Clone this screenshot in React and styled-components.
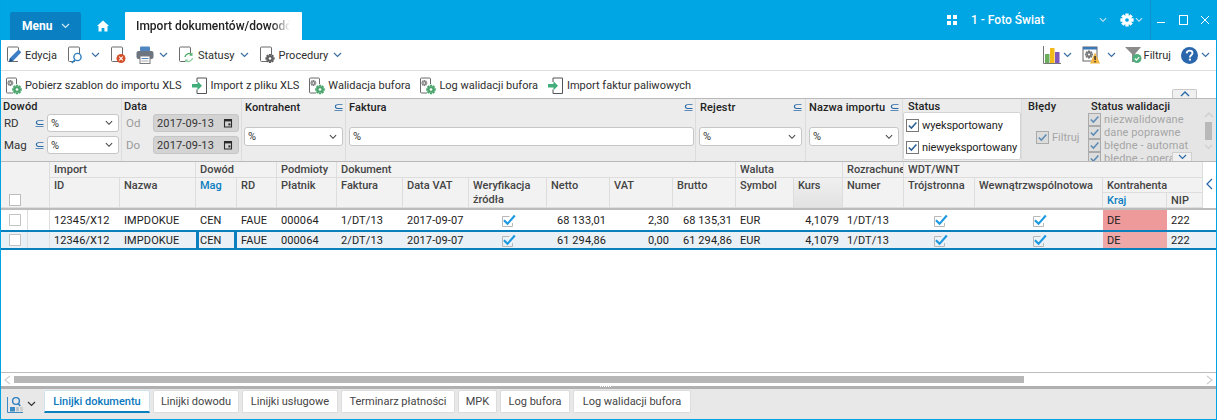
import React from "react";
import styled, { createGlobalStyle } from "styled-components";

const Global = createGlobalStyle`
  html, body { margin: 0; padding: 0; background: #fff; }
  body { font-family: Roboto, "Liberation Sans", sans-serif; font-size: 11px; color: #222; overflow: hidden; }
  * { box-sizing: border-box; }
`;

const COLS = "27px 22px 70px 76px 41px 40px 60px 66px 66px 78px 63px 63px 63px 58px 49px 61px 71px 128px 64px 36px 13px";

const Frame = styled.div`
  width: 1217px; height: 420px; display: flex; flex-direction: column;
  border-left: 1px solid #00a4e3; border-right: 1px solid #00a4e3; border-bottom: 1px solid #00a4e3;
  overflow: hidden; position: relative; background: #fff;
`;

/* title bar */
const TitleBar = styled.header`
  height: 40px; flex: none; background: #00a5e3; display: flex; align-items: flex-end; margin: 0 -1px; color: #fff;
`;
const MenuButton = styled.div`
  margin-left: 10px; width: 71px; height: 28px; background: #0a80c2; border-radius: 2px 2px 0 0;
  display: flex; align-items: center; padding-left: 12px; gap: 9px; font-weight: 700; font-size: 12px;
`;
const HomeSlot = styled.div`
  width: 44px; height: 28px; display: flex; align-items: center; justify-content: center;
`;
const ActiveTab = styled.div`
  width: 177px; height: 28px; background: #fff; color: #222; font-weight: 500; font-size: 12px;
  display: flex; align-items: center; padding-left: 11px; border-radius: 1px 1px 0 0;
`;
const FadeText = styled.span`
  display: block; width: 154px; white-space: nowrap; overflow: hidden;
  -webkit-mask-image: linear-gradient(to right, #000 88%, transparent 100%);
  mask-image: linear-gradient(to right, #000 88%, transparent 100%);
`;
const TitleRight = styled.div`
  margin-left: auto; height: 40px; display: flex; align-items: center; padding: 0 1px 1px 0;
`;
const CompanyName = styled.span`
  font-weight: 500; font-size: 12px; margin: 0 0 0 14px; width: 128px; white-space: nowrap;
`;
const TitleGear = styled.div`
  margin-left: 13px; display: flex;
`;
const TitleDivider = styled.div`
  width: 1px; height: 40px; background: #0a93cc; margin: 0 -1px 0 7px;
`;
const WinBtn = styled.div`
  width: 22px; height: 20px; display: flex; align-items: center; justify-content: center;
`;

/* toolbars */
const Toolbar = styled.div`
  flex: none; height: ${p => p.$h}px; display: flex; align-items: center; padding: ${p => p.$pt || 0}px 0 0 ${p => p.$pl}px;
  border-bottom: ${p => p.$flat ? "none" : "1px solid #dedede"}; background: #fff; font-size: 11px; color: #2e2e2e;
  position: relative;
`;
const ToolItem = styled.div`
  display: flex; align-items: center; gap: ${p => p.$gap ?? 3}px; margin-left: ${p => p.$ml || 0}px; margin-right: ${p => p.$mr || 0}px; white-space: nowrap;
`;
const Spacer = styled.div` flex: 1; `;
const CollapseTab = styled.div`
  position: absolute; right: 19px; bottom: 0; width: 25px; height: 9px; background: #f0f0f0;
  border: 1px solid #c8c8c8; border-bottom: none; border-radius: 2px 2px 0 0;
  display: flex; align-items: center; justify-content: center;
`;

/* filter panel */
const FilterPanel = styled.section`
  flex: none; height: 64px; display: grid;
  grid-template-columns: 121px 120px 104px 350px 110px 97px 119px 63px 131px;
  border-top: 1px solid #b9b9b9; border-bottom: 1px solid #b9b9b9; background: #ececec; overflow: hidden;
`;
const FilterCol = styled.div`
  border-right: ${p => p.$plain ? "none" : "1px solid #dcdcdc"};
  background: ${p => p.$dark ? "#e5e5e5" : "transparent"};
  padding: ${p => p.$pad || "0 2px 0 2px"};
  display: flex; flex-direction: column; position: relative; min-width: 0; overflow: hidden;
`;
const FilterHead = styled.div`
  display: flex; align-items: center; justify-content: space-between; height: 14px; flex: none;
  margin-top: ${p => p.$mt || 0}px; padding-left: ${p => p.$pl || 0}px;
  font-weight: 500; font-size: 11px; letter-spacing: .1px; color: #222; white-space: nowrap;
`;
const FieldRow = styled.div`
  display: flex; align-items: center; margin-top: ${p => p.$mt || 0}px; height: ${p => p.$h || 18}px; flex: none;
`;
const FieldLabel = styled.span`
  width: ${p => p.$w}px; flex: none; padding-left: ${p => p.$pl ?? 1}px; font-size: 11.5px; color: ${p => p.$muted ? "#9a9a9a" : "#333"};
`;
const Select = styled.div`
  width: ${p => p.$w ? p.$w + "px" : "100%"}; height: ${p => p.$h || 18}px; flex: none; background: ${p => p.$date ? "#d3d3d3" : "#fff"};
  border: 1px solid #c6c6c6; border-radius: 3px; display: flex; align-items: center; justify-content: space-between;
  padding: 0 5px 0 3px; font-size: 11px; letter-spacing: .15px; color: #333; margin-left: ${p => p.$ml || 0}px; margin-top: ${p => p.$mt || 0}px;
`;
const StatusBox = styled.div`
  width: 118px; height: 48px; margin-top: -1px; flex: none; background: #fff; border: 1px solid #d4d4d4; border-radius: 2px;
  display: flex; flex-direction: column; justify-content: space-around; padding: 1px 0 0 2px;
`;
const CheckLine = styled.label`
  display: flex; align-items: center; gap: ${p => p.$gap ?? 3}px; white-space: nowrap; height: ${p => p.$h || 20}px; flex: none;
  margin-top: ${p => p.$mt || 0}px; padding-left: ${p => p.$pl || 0}px;
  color: ${p => p.$muted ? "#a5a5a5" : "#222"}; font-size: ${p => p.$fs || 11}px; letter-spacing: ${p => p.$ls ?? -0.1}px;
`;
const ScrollRail = styled.div`
  position: absolute; right: 3px; top: 13px; width: 9px; bottom: 0; display: flex; flex-direction: column; align-items: center;
`;
const ScrollThumb = styled.div`
  width: 7px; height: 18px; background: #b9b9b9; margin: 4px 0;
`;
const DownTab = styled.div`
  position: absolute; right: 24px; bottom: 0; width: 20px; height: 9px; background: #f0f0f0; border: 1px solid #cfcfcf; border-bottom: none;
  display: flex; align-items: center; justify-content: center;
`;

/* table */
const HeadGrid = styled.div`
  flex: none; display: grid; grid-template-columns: ${COLS}; grid-template-rows: 16px 15px 15px;
  border-bottom: 2px solid #bcbcbc; height: 48px;
`;
const HeadCell = styled.div`
  grid-column: ${p => p.$c}; grid-row: ${p => p.$r};
  background: ${p => p.$sorted ? "linear-gradient(to bottom,#f0f0f0,#e2e2e2)" : "#f2f2f2"};
  border-right: 1px solid #dddddd; border-bottom: 1px solid #dddddd;
  padding: 1px 3px 0 4px; font-weight: 500; font-size: 11px; line-height: 14px; color: ${p => p.$active ? "#0a7fc1" : "#444"};
  overflow: hidden; white-space: ${p => p.$wrap ? "normal" : "nowrap"};
  display: ${p => p.$corner ? "flex" : "block"}; align-items: flex-end;
`;
const CornerBox = styled.div`
  width: 12px; height: 12px; background: #fff; border: 1px solid #bdbdbd; margin: 0 0 1px 4px;
`;
const Gutter = styled.div`
  grid-column: 21; grid-row: 1 / 4; background: #fff; display: flex; align-items: center; justify-content: center; padding-bottom: 2px;
`;
const Row = styled.div`
  flex: none; display: grid; grid-template-columns: ${COLS}; height: 20px;
  background: ${p => p.$selected ? "#e9f1f6" : "#fff"};
  border-top: ${p => p.$selected ? "2px solid #0a7fbd" : "none"};
  border-bottom: ${p => p.$selected ? "2px solid #0a7fbd" : "none"};
`;
const Cell = styled.div`
  padding: 0 ${p => p.$right ? 4 : 2}px 0 ${p => p.$right ? 0 : 4}px; display: flex; align-items: center;
  justify-content: ${p => p.$center ? "center" : p.$right ? "flex-end" : "flex-start"};
  font-size: 11px; letter-spacing: .1px; color: #222; white-space: nowrap; overflow: hidden;
  border-right: ${p => p.$rule ? "1px solid #dedede" : "none"};
  background: ${p => p.$flag ? (p.$selected ? "#eea8a8" : "#ef9a9a") : "transparent"};
  box-shadow: ${p => p.$focus ? "inset 3px 0 0 #0a7fbd, inset -3px 0 0 #0a7fbd" : "none"};
`;
const RowBox = styled.div`
  width: 12px; height: 12px; background: #fff; border: 1px solid #c4c4c4; margin-left: 4px;
`;
const TableBody = styled.div`
  flex: 1; background: #fff; border-bottom: 1px solid #bcbcbc;
`;
const HScroll = styled.div`
  flex: none; height: 13px; background: #fff; display: flex; align-items: center; padding-left: 3px;
`;
const HThumb = styled.div`
  width: 1010px; height: 7px; background: #b7b7b7; margin: 0 0 0 3px;
`;
const HEnd = styled.div`
  margin-left: auto; padding-right: 3px; display: flex;
`;
const SplitBand = styled.div`
  flex: none; height: 3px; background: #b0b0b0; display: flex; justify-content: center; align-items: flex-start; padding-right: 6px;
`;
const GripDots = styled.div`
  width: 11px; height: 1px; border-top: 1px dotted #fff;
`;
const TabBar = styled.nav`
  flex: none; height: 30px; background: #e8e8e8; display: flex; align-items: flex-start; padding: 1px 0 0 6px; gap: 3px;
`;
const TabIcon = styled.div`
  width: 34px; height: 24px; display: flex; align-items: center; gap: 3px; margin-top: 2px;
`;
const Tab = styled.div`
  height: 23px; width: ${p => p.$w}px; background: #fff; border: 1px solid #dcdcdc; border-radius: 2px 2px 0 0;
  display: flex; align-items: center; justify-content: center; white-space: nowrap; font-size: 11px;
  color: #444; font-weight: 400;
  ${p => p.$active && "color:#0a78bd; font-weight:500; border-bottom:2px solid #0a7fbd; border-color:#cfe3ef #cfe3ef #0a7fbd;"}
`;

/* icons */
const Chev = ({ c = "#3a6ea5", w = 9, ml = 0 }) => (
  <svg width={w} height="6" viewBox="0 0 9 6" style={{ marginLeft: ml, flex: "none" }}>
    <path d="M1 1l3.5 3.5L8 1" fill="none" stroke={c} strokeWidth="1.2" />
  </svg>
);
const Doc = () => <path d="M9 15.5H3.5a1 1 0 0 1-1-1V2a1 1 0 0 1 1-1h9a1 1 0 0 1 1 1v7" fill="none" stroke="#6b6b6b" strokeWidth="1" />;
const I = ({ children, w = 18, h = 18 }) => <svg width={w} height={h} viewBox={`0 0 ${w} ${h}`} style={{ flex: "none" }}>{children}</svg>;
const Edit = () => <I><path d="M12 15.5H2.5a1 1 0 0 1-1-1V2a1 1 0 0 1 1-1h9a1 1 0 0 1 1 1v4" fill="none" stroke="#6b6b6b" /><path d="M3 16l1-4L12.5 3.5l2.8 2.8L7 15z" fill="#3c7fc4" /><path d="M3 16l1-4 3 3z" fill="#1e4f86" /></I>;
const Preview = () => <I><Doc /><circle cx="11.5" cy="11" r="3.6" fill="#fff" stroke="#2d7fc1" strokeWidth="1.4" /><path d="M8.8 14l-3 3" stroke="#2d7fc1" strokeWidth="1.6" /></I>;
const Del = () => <I><Doc /><circle cx="12" cy="12.5" r="4.5" fill="#d4502a" /><path d="M10.2 10.7l3.6 3.6M13.8 10.7l-3.6 3.6" stroke="#fff" strokeWidth="1.1" /></I>;
const Printer = () => <I><rect x="4" y="0.5" width="10" height="6" fill="#4f86bf" rx="1" /><rect x="0.5" y="5" width="17" height="8" rx="2" fill="#6c7580" /><rect x="4" y="10" width="10" height="7.5" fill="#fff" stroke="#7b7b7b" /><rect x="5.5" y="12" width="7" height="1" fill="#4f86bf" /><rect x="5.5" y="14.5" width="7" height="1" fill="#aaa" /></I>;
const Refresh = () => <I><Doc /><path d="M8 11a4 4 0 0 1 6.6-2.4" fill="none" stroke="#54b06a" strokeWidth="1.5" /><path d="M15.5 6.5v3.2h-3.2z" fill="#54b06a" /><path d="M15.5 12a4 4 0 0 1-6.6 2.4" fill="none" stroke="#8fcf9f" strokeWidth="1.5" /><path d="M8 16.6v-3.2h3.2z" fill="#8fcf9f" /></I>;
const gearPath = (cx, cy, r) => {
  const t = [];
  for (let a = 0; a < 8; a++) {
    const x = Math.cos(a * Math.PI / 4), y = Math.sin(a * Math.PI / 4);
    t.push(`M${(cx + x * r * .6).toFixed(2)} ${(cy + y * r * .6).toFixed(2)}L${(cx + x * r).toFixed(2)} ${(cy + y * r).toFixed(2)}`);
  }
  return t.join("");
};
const Gear = ({ cx, cy, r, c, hole = "#fff" }) => (
  <g>
    <path d={gearPath(cx, cy, r)} stroke={c} strokeWidth={r * .5} />
    <circle cx={cx} cy={cy} r={r * .68} fill={c} />
    <circle cx={cx} cy={cy} r={r * .28} fill={hole} />
  </g>
);
const Proc = () => <I><Doc /><Gear cx={12} cy={12.5} r={4.6} c="#5f5f5f" /></I>;
const DocGears = () => <I><path d="M8 16H2.5a1 1 0 0 1-1-1V2a1 1 0 0 1 1-1h8a1 1 0 0 1 1 1v5" fill="none" stroke="#6b6b6b" /><Gear cx={5.3} cy={6} r={3} c="#808080" /><Gear cx={12} cy={12.5} r={4.8} c="#4aa56c" /></I>;
const ImportIco = () => <I><path d="M6 1h9.5v15.5H6V12.5M6 5V1" fill="none" stroke="#555" /><path d="M1 7h5.5V4.2L11 8.7l-4.5 4.5v-2.8H1z" fill="#3fae7a" /></I>;
const Bars = () => <I><path d="M.5 0v17.5H18" fill="none" stroke="#777" /><rect x="2" y="8" width="4.5" height="9" fill="#6cae5d" /><rect x="7" y="2" width="4.5" height="15" fill="#f3bb1a" /><rect x="12" y="6" width="4.5" height="11" fill="#7f58bd" /></I>;
const WarnWin = () => <I><rect x="1" y="1" width="14" height="14" fill="#fff" stroke="#666" /><rect x="1" y="1" width="14" height="2.5" fill="#3a79b5" /><Gear cx={7} cy={8.5} r={4} c="#777" /><path d="M13 6.5l5 11H8z" fill="#f2b544" /><rect x="12.4" y="10" width="1.3" height="4" fill="#222" /><rect x="12.4" y="15" width="1.3" height="1.3" fill="#222" /></I>;
const Funnel = () => <I><path d="M0 1h16l-6 7v8H7V8z" fill="#8b8b8b" /><circle cx="12" cy="12.5" r="4.5" fill="#4fae7b" /><path d="M9.8 12.5l1.6 1.6 2.8-3" fill="none" stroke="#fff" strokeWidth="1.1" /></I>;
const Help = () => <svg width="17" height="17" viewBox="0 0 17 17" style={{ flex: "none" }}><circle cx="8.5" cy="8.5" r="8.5" fill="#2a66ac" /><path d="M5.6 6.4c.2-1.8 1.4-2.7 3-2.7 1.7 0 2.9 1 2.9 2.4 0 2.2-2.6 2.2-2.6 4.3" fill="none" stroke="#fff" strokeWidth="1.8" /><rect x="7.9" y="11.6" width="2" height="2" fill="#fff" /></svg>;
const HomeIco = () => <svg width="12" height="12" viewBox="0 0 12 12"><path d="M6 .5L12 6h-1.5v5.5H7.4V8H4.6v3.5H1.5V6H0z" fill="#fff" /></svg>;
const GridIco = () => <svg width="10" height="10" viewBox="0 0 10 10" style={{ flex: "none" }}><path d="M0 0h4v4H0zM6 0h4v4H6zM0 6h4v4H0zM6 6h4v4H6z" fill="#fff" /></svg>;
const WhiteGear = () => <svg width="14" height="14" viewBox="0 0 14 14" style={{ flex: "none" }}><Gear cx={7} cy={7} r={6.6} c="#fff" hole="#00a5e3" /></svg>;
const SubsetIco = () => <svg width="9" height="7" viewBox="0 0 9 8" preserveAspectRatio="none" style={{ flex: "none" }}><path d="M8.5 .7H3.6a2.2 2.2 0 0 0 0 4.4h4.9M.5 7.3h8" fill="none" stroke="#2a6aa8" strokeWidth="1.1" /></svg>;
const CalIco = () => <svg width="10" height="10" viewBox="0 0 10 10" style={{ flex: "none" }}><path d="M1.5 1.5h7v7.5h-7zM1 2.6h8" fill="none" stroke="#2a2a2a" strokeWidth="1.1" /><rect x="1" y="1.2" width="8" height="2" fill="#2a2a2a" /><rect x="5.4" y="5.4" width="2" height="2" fill="#2a2a2a" /></svg>;
const SelChev = () => <Chev c="#444" w={8} />;
const Check = ({ muted }) => (
  <svg width="13" height="13" viewBox="0 0 13 13" style={{ flex: "none" }}>
    <rect x=".5" y=".5" width="12" height="12" fill={muted ? "#dcdcdc" : "#fff"} stroke={muted ? "#aaa" : "#777"} />
    <path d="M2.8 6.5l2.6 2.6 5-5.6" fill="none" stroke={muted ? "#5d8bb5" : "#2a5f96"} strokeWidth="1.5" />
  </svg>
);
const GridCheck = () => (
  <svg width="14" height="13" viewBox="0 0 14 13" style={{ flex: "none" }}>
    <path d="M10.5 12.5H.5v-10h7M10.5 9v3.5" fill="none" stroke="#b8b8b8" />
    <path d="M2.6 5.6l3 2.6L12 .8l1.6 1.4-8 9L1.2 7z" fill="#1a98e0" />
  </svg>
);
const ChevLeft = ({ c = "#2a6aa8", h = 12, s = 1.3 }) => <svg width="7" height={h} viewBox={`0 0 7 ${h}`} style={{ flex: "none" }}><path d={`M6 1L1 ${h / 2}l5 ${h / 2 - 1}`} fill="none" stroke={c} strokeWidth={s} /></svg>;
const ChevRight = () => <svg width="7" height="10" viewBox="0 0 7 10"><path d="M1 1l5 4-5 4" fill="none" stroke="#cfcfcf" strokeWidth="1.3" /></svg>;
const ChevUp = ({ c = "#2a6aa8" }) => <svg width="10" height="6" viewBox="0 0 10 6"><path d="M1 5l4-4 4 4" fill="none" stroke={c} strokeWidth="1.4" /></svg>;
const LookIco = () => (
  <svg width="17" height="17" viewBox="0 0 17 17" style={{ flex: "none" }}>
    <path d="M.5 1v15.5H16" fill="none" stroke="#3b8ac4" />
    <circle cx="9" cy="5" r="3.4" fill="none" stroke="#2d7fc1" strokeWidth="1.4" />
    <path d="M11 7.6l2.3 2.5" stroke="#2d7fc1" strokeWidth="1.5" />
    <rect x="3" y="11" width="5" height="4.5" fill="#3b8ac4" /><rect x="9" y="11" width="3" height="4.5" fill="#b9c6d0" /><rect x="13" y="11" width="3" height="4.5" fill="#cfcfcf" />
  </svg>
);

const RowData = [
  ["12345/X12", "IMPDOKUE", "CEN", "FAUE", "000064", "1/DT/13", "2017-09-07", "68 133,01", "2,30", "68 135,31", "EUR", "4,1079", "1/DT/13", "DE", "222"],
  ["12346/X12", "IMPDOKUE", "CEN", "FAUE", "000064", "2/DT/13", "2017-09-07", "61 294,86", "0,00", "61 294,86", "EUR", "4,1079", "1/DT/13", "DE", "222"],
];

const DataRow = ({ d, selected }) => (
  <Row $selected={selected}>
    <Cell $rule><RowBox /></Cell>
    <Cell $rule />
    <Cell>{d[0]}</Cell><Cell>{d[1]}</Cell>
    <Cell $focus={selected}>{d[2]}</Cell>
    <Cell>{d[3]}</Cell><Cell>{d[4]}</Cell><Cell>{d[5]}</Cell><Cell>{d[6]}</Cell>
    <Cell $center><GridCheck /></Cell>
    <Cell $right>{d[7]}</Cell><Cell $right>{d[8]}</Cell><Cell $right>{d[9]}</Cell>
    <Cell>{d[10]}</Cell><Cell $right>{d[11]}</Cell><Cell>{d[12]}</Cell>
    <Cell $center><GridCheck /></Cell><Cell $center><GridCheck /></Cell>
    <Cell $flag $selected={selected}>{d[13]}</Cell><Cell>{d[14]}</Cell>
  </Row>
);

export default function App() {
  return (
    <Frame>
      <Global />
      <TitleBar>
        <MenuButton>Menu <Chev c="#cfe8f6" w={9} /></MenuButton>
        <HomeSlot><HomeIco /></HomeSlot>
        <ActiveTab><FadeText>Import dokumentów/dowodów</FadeText></ActiveTab>
        <TitleRight>
          <GridIco />
          <CompanyName>1 - Foto Świat</CompanyName>
          <Chev c="#cfe8f6" w={8} />
          <TitleGear><WhiteGear /></TitleGear>
          <Chev c="#cfe8f6" w={8} ml={1} />
          <TitleDivider />
          <WinBtn><svg width="9" height="9"><rect y="7" width="8" height="1" fill="#fff" /></svg></WinBtn>
          <WinBtn><svg width="9" height="10"><rect x=".5" y=".5" width="8" height="9" fill="none" stroke="#fff" /></svg></WinBtn>
          <WinBtn><svg width="10" height="10"><path d="M1 1l8 8M9 1l-8 8" stroke="#fff" strokeWidth="1" /></svg></WinBtn>
        </TitleRight>
      </TitleBar>

      <Toolbar $h={31} $pl={5}>
        <ToolItem $gap={1}><Edit />Edycja</ToolItem>
        <ToolItem $ml={9} $gap={7}><Preview /><Chev /></ToolItem>
        <ToolItem $ml={9}><Del /></ToolItem>
        <ToolItem $ml={9} $gap={5}><Printer /><Chev /></ToolItem>
        <ToolItem $ml={9} $gap={3}><Refresh />Statusy<Chev ml={2} /></ToolItem>
        <ToolItem $ml={9} $gap={3}><Proc />Procedury<Chev ml={2} /></ToolItem>
        <Spacer />
        <ToolItem $gap={2}><Bars /><Chev /></ToolItem>
        <ToolItem $ml={10} $gap={7}><WarnWin /><Chev /></ToolItem>
        <ToolItem $ml={9} $gap={1}><Funnel />Filtruj</ToolItem>
        <ToolItem $ml={10} $gap={3} $mr={6}><Help /><Chev /></ToolItem>
      </Toolbar>

      <Toolbar $h={27} $pl={4} $pt={2} $flat>
        <ToolItem $gap={2}><DocGears />Pobierz szablon do importu XLS</ToolItem>
        <ToolItem $ml={9} $gap={2}><ImportIco />Import z pliku XLS</ToolItem>
        <ToolItem $ml={9} $gap={2}><DocGears />Walidacja bufora</ToolItem>
        <ToolItem $ml={9} $gap={2}><DocGears />Log walidacji bufora</ToolItem>
        <ToolItem $ml={9} $gap={2}><ImportIco />Import faktur paliwowych</ToolItem>
        <CollapseTab><ChevUp /></CollapseTab>
      </Toolbar>

      <FilterPanel>
        <FilterCol>
          <FilterHead>Dowód</FilterHead>
          <FieldRow $mt={1}><FieldLabel $w={32}>RD</FieldLabel><SubsetIco /><Select $w={72} $ml={3}>%<SelChev /></Select></FieldRow>
          <FieldRow $mt={4}><FieldLabel $w={32}>Mag</FieldLabel><SubsetIco /><Select $w={72} $ml={3}>%<SelChev /></Select></FieldRow>
        </FilterCol>
        <FilterCol>
          <FilterHead>Data</FilterHead>
          <FieldRow $mt={1}><FieldLabel $w={29} $muted $pl={2}>Od</FieldLabel><Select $w={86} $date>2017-09-13<CalIco /></Select></FieldRow>
          <FieldRow $mt={4}><FieldLabel $w={29} $muted $pl={2}>Do</FieldLabel><Select $w={86} $date>2017-09-13<CalIco /></Select></FieldRow>
        </FilterCol>
        <FilterCol>
          <FilterHead $mt={1} $pl={1}>Kontrahent<SubsetIco /></FilterHead>
          <Select $mt={13} $h={19}>%<SelChev /></Select>
        </FilterCol>
        <FilterCol $pad="0 2px 0 3px">
          <FilterHead $mt={1}>Faktura<SubsetIco /></FilterHead>
          <Select $mt={13} $h={19} $w={345}>%</Select>
        </FilterCol>
        <FilterCol $pad="0 3px 0 4px">
          <FilterHead $mt={1}>Rejestr<SubsetIco /></FilterHead>
          <Select $mt={13} $h={19} $w={103} $ml={-1}>%<SelChev /></Select>
        </FilterCol>
        <FilterCol $pad="0 3px 0 3px">
          <FilterHead $mt={1}>Nazwa importu<SubsetIco /></FilterHead>
          <Select $mt={13} $h={19} $w={90}>%<SelChev /></Select>
        </FilterCol>
        <FilterCol $pad="0">
          <FilterHead $pl={5}>Status</FilterHead>
          <StatusBox>
            <CheckLine><Check />wyeksportowany</CheckLine>
            <CheckLine><Check />niewyeksportowany</CheckLine>
          </StatusBox>
        </FilterCol>
        <FilterCol $dark $plain $pad="0 0 0 6px">
          <FilterHead>Błędy</FilterHead>
          <CheckLine $muted $mt={14} $pl={8} $ls={0}><Check muted />Filtruj</CheckLine>
        </FilterCol>
        <FilterCol $dark $plain $pad="0 0 0 3px">
          <FilterHead $pl={3}>Status walidacji</FilterHead>
          <CheckLine $muted $h={13} $ls={0.1}><Check muted />niezwalidowane</CheckLine>
          <CheckLine $muted $h={13} $ls={0.1}><Check muted />dane poprawne</CheckLine>
          <CheckLine $muted $h={13} $ls={0.1}><Check muted />błędne - automat</CheckLine>
          <CheckLine $muted $h={13} $ls={0.1}><Check muted />błędne - operator</CheckLine>
          <ScrollRail><ChevUp c="#cfcfcf" /><ScrollThumb /><Chev c="#cfcfcf" /></ScrollRail>
          <DownTab><Chev c="#2a6aa8" /></DownTab>
        </FilterCol>
      </FilterPanel>

      <HeadGrid>
        <HeadCell $c="1 / 3" $r="1 / 4" $corner><CornerBox /></HeadCell>
        <HeadCell $c="3 / 5" $r="1">Import</HeadCell>
        <HeadCell $c="5 / 7" $r="1">Dowód</HeadCell>
        <HeadCell $c="7" $r="1">Podmioty</HeadCell>
        <HeadCell $c="8 / 14" $r="1">Dokument</HeadCell>
        <HeadCell $c="14 / 16" $r="1">Waluta</HeadCell>
        <HeadCell $c="16" $r="1">Rozrachunek</HeadCell>
        <HeadCell $c="17 / 21" $r="1">WDT/WNT</HeadCell>
        <HeadCell $c="3" $r="2 / 4">ID</HeadCell>
        <HeadCell $c="4" $r="2 / 4">Nazwa</HeadCell>
        <HeadCell $c="5" $r="2 / 4" $active>Mag</HeadCell>
        <HeadCell $c="6" $r="2 / 4">RD</HeadCell>
        <HeadCell $c="7" $r="2 / 4">Płatnik</HeadCell>
        <HeadCell $c="8" $r="2 / 4">Faktura</HeadCell>
        <HeadCell $c="9" $r="2 / 4">Data VAT</HeadCell>
        <HeadCell $c="10" $r="2 / 4" $wrap>Weryfikacja źródła</HeadCell>
        <HeadCell $c="11" $r="2 / 4">Netto</HeadCell>
        <HeadCell $c="12" $r="2 / 4">VAT</HeadCell>
        <HeadCell $c="13" $r="2 / 4">Brutto</HeadCell>
        <HeadCell $c="14" $r="2 / 4">Symbol</HeadCell>
        <HeadCell $c="15" $r="2 / 4" $sorted>Kurs</HeadCell>
        <HeadCell $c="16" $r="2 / 4">Numer</HeadCell>
        <HeadCell $c="17" $r="2 / 4">Trójstronna</HeadCell>
        <HeadCell $c="18" $r="2 / 4">Wewnątrzwspólnotowa</HeadCell>
        <HeadCell $c="19 / 21" $r="2">Kontrahenta</HeadCell>
        <HeadCell $c="19" $r="3" $active>Kraj</HeadCell>
        <HeadCell $c="20" $r="3">NIP</HeadCell>
        <Gutter><ChevLeft /></Gutter>
      </HeadGrid>

      <DataRow d={RowData[0]} />
      <DataRow d={RowData[1]} selected />
      <TableBody />

      <HScroll>
        <ChevLeft c="#cfcfcf" h={10} />
        <HThumb />
        <HEnd><ChevRight /></HEnd>
      </HScroll>
      <SplitBand><GripDots /></SplitBand>
      <TabBar>
        <TabIcon><LookIco /><Chev c="#333" /></TabIcon>
        <Tab $active $w={106}>Linijki dokumentu</Tab>
        <Tab $w={86}>Linijki dowodu</Tab>
        <Tab $w={96}>Linijki usługowe</Tab>
        <Tab $w={114}>Terminarz płatności</Tab>
        <Tab $w={39}>MPK</Tab>
        <Tab $w={70}>Log bufora</Tab>
        <Tab $w={118}>Log walidacji bufora</Tab>
      </TabBar>
    </Frame>
  );
}
